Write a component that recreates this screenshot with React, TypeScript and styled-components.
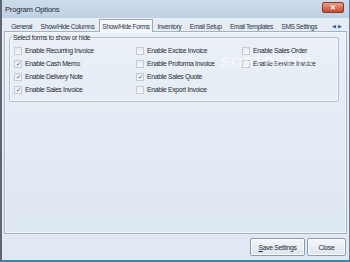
import React from "react";
import styled, { createGlobalStyle } from "styled-components";

const GlobalStyle = createGlobalStyle`
  html, body {
    margin: 0;
    padding: 0;
    background: #ffffff;
  }
  body {
    font-family: "Liberation Sans", Arial, sans-serif;
  }
`;

const Window = styled.div`
  width: 350px;
  height: 262px;
  box-sizing: border-box;
  display: flex;
  flex-direction: column;
  background: linear-gradient(#e6edf7, #dfe8f3);
  border-left: 2px solid #5f6770;
  border-right: 1px solid #6e7c88;
  border-bottom: 2px solid #2a8fa8;
  overflow: hidden;
`;

const TitleBar = styled.div`
  height: 18px;
  flex: none;
  display: flex;
  align-items: center;
  justify-content: space-between;
  padding: 0 5px 0 3px;
  background: linear-gradient(#cddbea, #c0d1e5);
`;

const Title = styled.span`
  font-size: 7.6px;
  color: #1e2a38;
  letter-spacing: -0.2px;
`;

const CloseButton = styled.div`
  width: 22px;
  height: 11px;
  margin-top: -3px;
  box-sizing: border-box;
  border: 1px solid #8a3a2a;
  border-radius: 2px;
  background: linear-gradient(#e9a08c, #c9482e);
  display: flex;
  align-items: center;
  justify-content: center;
  color: #ffffff;
  font-size: 7px;
  font-weight: bold;
  line-height: 1;
`;

const Body = styled.div`
  flex: 1;
  display: flex;
  flex-direction: column;
  padding: 0 2px 0 2px;
`;

const TabStrip = styled.div`
  height: 13px;
  display: flex;
  align-items: flex-end;
  padding-left: 3px;
  position: relative;
`;

const Tab = styled.div<{ active?: boolean }>`
  font-size: 6.6px;
  letter-spacing: -0.35px;
  color: #2a3440;
  height: ${({ active }) => (active ? "13px" : "11px")};
  display: flex;
  align-items: center;
  padding: 0 ${({ active }) => (active ? "2.8px" : "3.2px")};
  box-sizing: border-box;
  white-space: nowrap;
  background: ${({ active }) => (active ? "#f4f7fb" : "transparent")};
  border: 1px solid ${({ active }) => (active ? "#9aa9ba" : "transparent")};
  border-bottom: none;
  margin-bottom: ${({ active }) => (active ? "-1px" : "0")};
  position: relative;
  z-index: 1;
`;

const Arrows = styled.div`
  margin-left: auto;
  margin-right: 5px;
  height: 11px;
  display: flex;
  align-items: center;
  gap: 2px;
  color: #2f5f9a;
  font-size: 5px;
`;

const Panel = styled.div`
  height: 203px;
  box-sizing: border-box;
  border: 1px solid #a5b2c2;
  box-shadow: inset 0 0 0 1px #f3f6fa;
  background: linear-gradient(#ebf0f7, #dde7f2);
  padding: 2px 7px 0 4px;
`;

const Group = styled.fieldset`
  margin: 0;
  padding: 3px 0 3px 4px;
  border: 1px solid #b3c0cf;
  border-radius: 2px;
  box-shadow: inset 0 0 0 1px #f5f8fb;
  display: grid;
  grid-template-columns: 122px 106px 1fr;
  grid-auto-rows: 13px;
  height: 68px;
  box-sizing: border-box;
`;

const Legend = styled.legend`
  font-size: 6.8px;
  letter-spacing: -0.3px;
  color: #222c36;
  padding: 0 1px;
  margin-left: -2px;
`;

const Option = styled.label`
  display: flex;
  align-items: center;
  gap: 3px;
  font-size: 6.8px;
  letter-spacing: -0.3px;
  color: #1f2933;
  white-space: nowrap;
`;

const Box = styled.span<{ checked?: boolean }>`
  width: 8px;
  height: 8px;
  box-sizing: border-box;
  border: 1px solid #c4cbd4;
  background: linear-gradient(#e8ebef, #f7f8fa);
  display: flex;
  align-items: center;
  justify-content: center;
  color: #2b4d8c;
  font-size: 6px;
  line-height: 1;
  letter-spacing: 0;
`;

const Footer = styled.div`
  flex: 1;
  display: flex;
  justify-content: flex-end;
  align-items: center;
  gap: 2px;
  padding-right: 1px;
`;

const Button = styled.div<{ w: number }>`
  width: ${({ w }) => w}px;
  height: 18px;
  box-sizing: border-box;
  border: 1px solid #8c9bad;
  border-radius: 2px;
  background: linear-gradient(#f4f7fa, #dde5ee);
  box-shadow: inset 0 0 0 1px #fbfcfd;
  display: flex;
  align-items: center;
  justify-content: center;
  font-size: 6.8px;
  letter-spacing: -0.3px;
  color: #1f2933;
`;

const Watermark = styled.span`
  position: absolute;
  left: 220px;
  top: 53px;
  font-size: 15px;
  font-weight: bold;
  letter-spacing: 1px;
  color: rgba(255, 255, 255, 0.45);
  pointer-events: none;
`;

const Stage = styled.div`
  position: relative;
`;

const tabs = [
  "General",
  "Show/Hide Columns",
  "Show/Hide Forms",
  "Inventory",
  "Email Setup",
  "Email Templates",
  "SMS Settings",
];

// laid out column by column, like the original grid
const forms: [string, boolean][][] = [
  [
    ["Enable Recurring Invoice", false],
    ["Enable Cash Memo", true],
    ["Enable Delivery Note", true],
    ["Enable Sales Invoice", true],
  ],
  [
    ["Enable Excise Invoice", false],
    ["Enable Proforma Invoice", false],
    ["Enable Sales Quote", true],
    ["Enable Export Invoice", false],
  ],
  [
    ["Enable Sales Order", false],
    ["Enable Service Invoice", false],
  ],
];

const App: React.FC = () => {
  const cells: React.ReactNode[] = [];
  for (let row = 0; row < 4; row++) {
    forms.forEach((col, c) => {
      const item = col[row];
      cells.push(
        item ? (
          <Option key={`${row}-${c}`}>
            <Box checked={item[1]}>{item[1] ? "✓" : ""}</Box>
            {item[0]}
          </Option>
        ) : (
          <span key={`${row}-${c}`} />
        )
      );
    });
  }

  return (
    <Stage>
      <GlobalStyle />
      <Window>
        <TitleBar>
          <Title>Program Options</Title>
          <CloseButton>✕</CloseButton>
        </TitleBar>
        <Body>
          <TabStrip>
            {tabs.map((t) => (
              <Tab key={t} active={t === "Show/Hide Forms"}>
                {t}
              </Tab>
            ))}
            <Arrows>
              <span>◀</span>
              <span>▶</span>
            </Arrows>
          </TabStrip>
          <Panel>
            <Group>
              <Legend>Select forms to show or hide</Legend>
              {cells}
            </Group>
          </Panel>
          <Footer>
            <Button w={55}>
              <u>S</u>ave Settings
            </Button>
            <Button w={39}>Close</Button>
          </Footer>
        </Body>
      </Window>
      <Watermark>SOFTPEDIA</Watermark>
    </Stage>
  );
};

export default App;
